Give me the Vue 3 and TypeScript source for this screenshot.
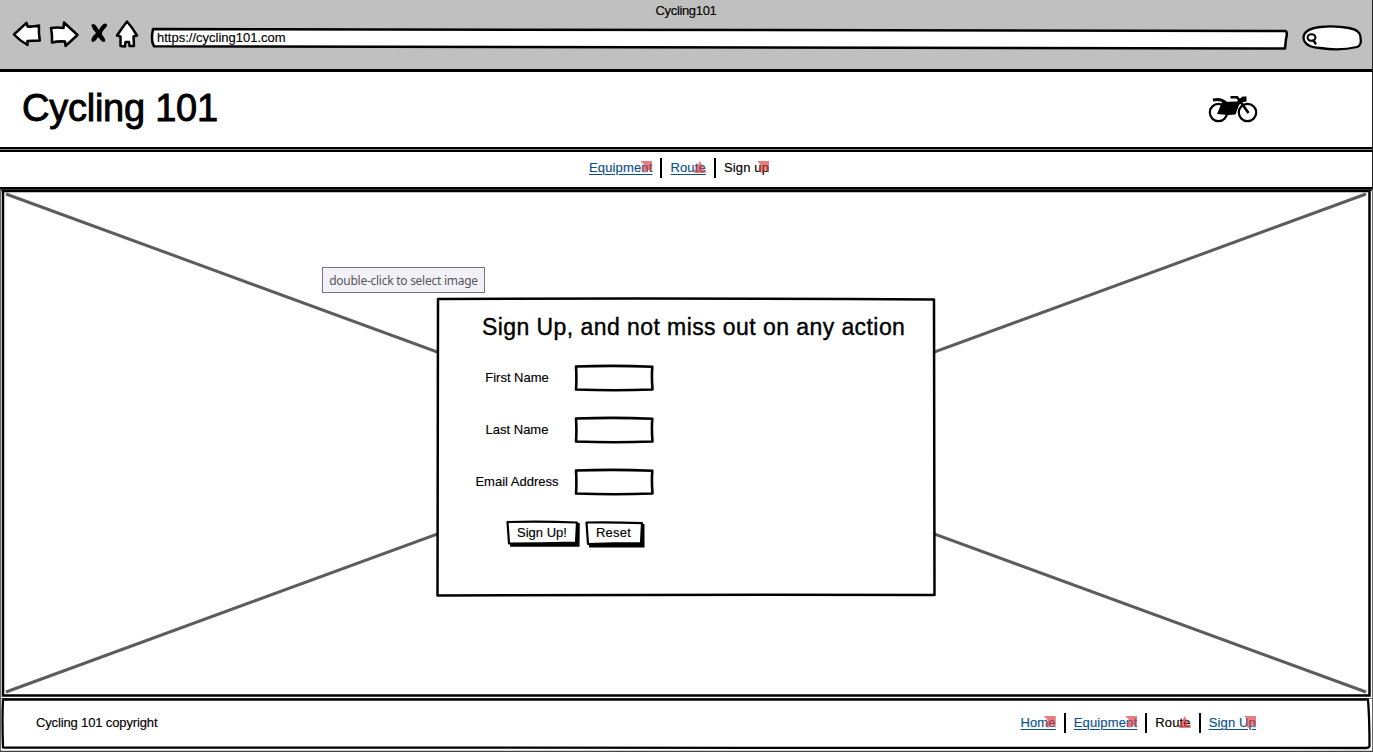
<script setup lang="ts">
interface NavItem {
  label: string
  link: boolean
  marker: 'corner' | 'up'
}

const topNav: NavItem[] = [
  { label: 'Equipment', link: true, marker: 'corner' },
  { label: 'Route', link: true, marker: 'up' },
  { label: 'Sign up', link: false, marker: 'corner' },
]

const footerNav: NavItem[] = [
  { label: 'Home', link: true, marker: 'corner' },
  { label: 'Equipment', link: true, marker: 'corner' },
  { label: 'Route', link: false, marker: 'up' },
  { label: 'Sign Up', link: true, marker: 'corner' },
]

const fields: string[] = ['First Name', 'Last Name', 'Email Address']
</script>

<template>
  <div class="window">
    <header class="chrome">
      <div class="window-title">Cycling101</div>
      <div class="toolbar">
        <svg class="tools" width="140" height="40" viewBox="0 0 140 40">
          <g fill="#fff" stroke="#000" stroke-width="2.500" stroke-linejoin="round">
            <path d="M14 19.500 L26.500 7.800 L27.500 11.500 Q33 12 39 10.500 Q38.500 18 39.800 25.500 L27.500 26 L27.500 30 Q20 26 14 19.500 Z" />
            <path d="M51 13 Q57 12 63.500 13 L64 7.500 L77.500 20 L65.500 31 L65 26.500 Q58 26 52 27.500 Q52.500 20 51 13 Z" />
            <path d="M127 6.500 Q132 12 137 20.500 L133.500 21.500 L134 31 L129.500 31 L129 27 L125.500 27 L125 31.500 L120.500 31 L120.500 21.500 L117 20.500 Q122 13 127 6.500 Z" />
          </g>
          <path d="M91.300 10 Q94 7 97 12 L99 15 Q102 9 105 8.500 Q109 9 105.500 13 Q101.500 16.500 102 19.500 L105 24 Q106 28 102 26.500 L98 22 Q95.500 27 92.500 27 Q90 25.500 93 21 L96 18 Q92 14 91.300 10 Z" />
        </svg>
        <div class="address">
          <svg class="under" width="1138" height="23" viewBox="0 0 1138 23">
            <path d="M3 2 Q600 1.500 1135 4 Q1138 4 1136 12 L1135 21.500 Q600 20 4 19.300 Q.5 14 3 2 Z" fill="#fff" stroke="#000" stroke-width="2.500" stroke-linejoin="round" />
          </svg>
          <span>https://cycling101.com</span>
        </div>
        <svg class="search" width="62" height="27" viewBox="0 0 62 27">
          <path d="M1.500 12.500 Q2 4 18 2 Q33 .5 47 3 Q59 5 58.500 13 Q60 20 55 22 Q38 26 18 23 Q2 22 1.500 12.500 Z" fill="#fff" stroke="#000" stroke-width="2.300" />
          <ellipse cx="9.500" cy="12.500" rx="3.900" ry="3.300" fill="none" stroke="#000" stroke-width="2.100" />
          <path d="M11.500 15.500 L13.500 18.500" stroke="#000" stroke-width="2.400" stroke-linecap="round" />
        </svg>
      </div>
    </header>

    <section class="masthead">
      <h1>Cycling 101</h1>
      <svg class="bike" width="50" height="30" viewBox="0 0 50 30">
        <g fill="none" stroke="#000" stroke-width="2.200">
          <circle cx="10.500" cy="18.500" r="8.700" />
          <circle cx="39.500" cy="18.500" r="8.700" />
          <path d="M5 6 Q13 4 18 9" stroke-width="3" />
          <path d="M22.500 3.200 L29 3.200 L32 7 L40.500 19" stroke-width="2.600" />
        </g>
        <path d="M14 8 L29 7.500 L31.500 5 L34.500 2.500 L38.500 2.500 L38.500 7.500 L34 8.200 L31 11 L27.500 20.500 L20 21 L9 20 Z" />
      </svg>
    </section>

    <nav class="topnav">
      <div class="links">
        <span v-for="item in topNav" :key="item.label" class="entry">
          <a :class="{ link: item.link }">{{ item.label }}<i :class="item.marker"></i></a>
        </span>
      </div>
    </nav>

    <main class="hero">
      <svg class="under" width="1373" height="509" viewBox="0 0 1373 509">
        <path d="M0 1 L1373 1" stroke="#444" stroke-width="2" />
        <path d="M.5 0 L.5 509 M1372.500 0 L1372.500 509" stroke="#666" stroke-width="1" />
        <g fill="none" stroke="#5c5c5c" stroke-width="3">
          <path d="M6 5 L1366 503" />
          <path d="M1366 5 L6 503" />
        </g>
        <path d="M3 2 L1369.500 2 L1369.500 506.500 L3 506.500 Z" fill="none" stroke="#000" stroke-width="2.500" />
      </svg>
      <div class="tip">double-click to select image</div>
      <form class="card" @submit.prevent>
        <svg class="under" width="500" height="300" viewBox="0 0 500 300">
          <path d="M2 2 Q250 1 498 2.500 L498.500 298 Q250 297.500 1.500 298.500 Z" fill="#fff" stroke="#000" stroke-width="2.500" stroke-linejoin="round" />
        </svg>
        <h2>Sign Up, and not miss out on any action</h2>
        <label v-for="field in fields" :key="field" class="row">
          <span class="caption">{{ field }}</span>
          <svg width="80" height="28" viewBox="0 0 80 28">
            <path d="M2 2.500 Q40 1.200 78.300 2.700 Q77.500 14 78.500 25.500 Q40 27 2 25.500 Q2.800 14 2 2.500 Z" fill="#fff" stroke="#000" stroke-width="2.600" stroke-linejoin="round" />
          </svg>
        </label>
        <div class="actions">
          <button type="button" class="signup">
            <svg class="under" width="75" height="28" viewBox="0 0 75 28">
              <path d="M4 4 L73.800 3 L73.500 26.800 L4 26.800 Z" />
              <path d="M1.500 2 Q35 1 71 2.500 L70 22.500 Q35 23.500 3 23.500 Z" fill="#fff" stroke="#000" stroke-width="2.200" stroke-linejoin="round" />
            </svg>
            <span>Sign Up!</span>
          </button>
          <button type="button" class="reset">
            <svg class="under" width="60" height="28" viewBox="0 0 60 28">
              <path d="M4 4 L59.500 4 L59.500 27.500 L4 27.500 Z" />
              <path d="M1.500 2.500 Q28 2 57 3.200 L56 23 Q28 23 3 24 Z" fill="#fff" stroke="#000" stroke-width="2.200" stroke-linejoin="round" />
            </svg>
            <span>Reset</span>
          </button>
        </div>
      </form>
    </main>

    <footer class="footer">
      <svg class="under" width="1373" height="54" viewBox="0 0 1373 54">
        <path d="M0 .2 L1373 .2" stroke="#777" stroke-width="1.500" />
        <path d="M.5 0 L.5 54 M1372.500 0 L1372.500 54" stroke="#666" stroke-width="1" />
        <path d="M3 1.500 L1368 1.500 Q1369.500 20 1369.500 48 Q1369 50 1366 50 L3 49.500 Q2 20 3 1.500 Z" fill="none" stroke="#000" stroke-width="2.300" stroke-linejoin="round" />
        <path d="M0 53.300 L1373 53.300" stroke="#444" stroke-width="1.200" />
      </svg>
      <span class="copyright">Cycling 101 copyright</span>
      <div class="links">
        <span v-for="item in footerNav" :key="item.label" class="entry">
          <a :class="{ link: item.link }">{{ item.label }}<i :class="item.marker"></i></a>
        </span>
      </div>
    </footer>
  </div>
</template>

<style>
html,
body {
  overflow: hidden;
  background: #fff;
}
</style>

<style scoped>
.window {
  box-sizing: border-box;
  display: flex;
  flex-direction: column;
  width: 1373px;
  height: 752px;
  overflow: hidden;
  background: #fff;
  color: #000;
  font: 13px/16px "Liberation Sans", Arial, sans-serif;
  -webkit-text-stroke: 0.15px;
}
svg {
  display: block;
  flex: none;
}
.under {
  position: absolute;
  left: 0;
  top: 0;
}
h1,
h2 {
  margin: 0;
  font-weight: 400;
  white-space: nowrap;
}
.chrome {
  box-sizing: border-box;
  height: 72px;
  background: #c0c0c0;
  border-bottom: 3px solid #000;
  border-right: 1px solid #222;
}
.window-title {
  height: 15px;
  padding-top: 3px;
  text-align: center;
  letter-spacing: -0.35px;
}
.toolbar {
  display: flex;
  align-items: flex-start;
}
.tools {
  margin-top: -3px;
}
.address {
  position: relative;
  width: 1138px;
  height: 23px;
  margin: 9px 0 0 10px;
}
.address span {
  position: relative;
  display: block;
  padding: 3px 0 0 7px;
}
.search {
  margin: 7px 0 0 14px;
}
.masthead {
  box-sizing: border-box;
  display: flex;
  justify-content: space-between;
  height: 80px;
  padding: 12px 114px 0 22px;
  border-bottom: 2px solid #000;
  border-right: 1px solid #222;
  background: linear-gradient(#000, #000) 0 75px / 100% 2px no-repeat, linear-gradient(#888, #888) 0 77px / 100% 1px no-repeat;
}
h1 {
  font-size: 38px;
  line-height: 48px;
  letter-spacing: -0.25px;
  -webkit-text-stroke: 0.9px;
}
.bike {
  margin-top: 10px;
}
.topnav {
  box-sizing: border-box;
  display: flex;
  justify-content: center;
  height: 37px;
  padding: 6px 14px 0 0;
  border-bottom: 2px solid #000;
  border-right: 1px solid #222;
}
.links {
  display: flex;
  letter-spacing: 0.15px;
}
.entry {
  height: 20px;
  line-height: 20px;
  white-space: nowrap;
}
.entry + .entry {
  margin-left: 8px;
  padding-left: 8px;
  border-left: 2px solid #000;
}
.entry a {
  position: relative;
  display: block;
}
.link {
  color: #0b4f8f;
  text-decoration: underline;
  text-decoration-thickness: 1px;
  text-underline-offset: 2px;
}
.entry i {
  position: absolute;
  right: 0;
  top: 3px;
  width: 12px;
  height: 12px;
  background: rgba(217, 60, 60, 0.65);
}
.corner {
  clip-path: polygon(0 0, 100% 0, 100% 100%, 72% 72%, 35% 100%, 10% 75%, 35% 38%);
}
.up {
  clip-path: polygon(50% 0, 78% 50%, 78% 72%, 100% 72%, 100% 100%, 0 100%, 0 72%, 22% 72%, 22% 50%);
}
.hero {
  position: relative;
  height: 509px;
}
.tip {
  position: absolute;
  left: 322px;
  top: 78px;
  box-sizing: border-box;
  width: 163px;
  height: 26px;
  border: 1px solid #777;
  background: #f1f1f7;
  color: #575757;
  font: 12px/26px "Noto Sans", "Open Sans", sans-serif;
  letter-spacing: -0.26px;
  text-align: center;
  white-space: nowrap;
  -webkit-text-stroke: 0;
}
.card {
  position: relative;
  box-sizing: border-box;
  width: 500px;
  height: 300px;
  margin: 0 0 0 436px;
  top: 108px;
}
h2 {
  position: relative;
  padding: 15px 0 0 46px;
  font-size: 23px;
  line-height: 30px;
  letter-spacing: 0.43px;
  -webkit-text-stroke: 0.4px;
}
.row {
  position: relative;
  display: flex;
  align-items: center;
  height: 28px;
  margin: 0 0 24px 31px;
}
h2 + .row {
  margin-top: 22px;
}
.caption {
  width: 100px;
  margin-right: 7px;
  text-align: center;
}
.actions {
  position: relative;
  display: flex;
  gap: 4px;
  padding-left: 70px;
}
button {
  position: relative;
  height: 28px;
  padding: 0;
  border: 0;
  background: none;
  color: #000;
  font: inherit;
}
button span {
  position: relative;
  display: block;
  margin: -3px 3px 0 0;
}
.signup {
  width: 75px;
}
.reset {
  width: 60px;
}
.reset span {
  letter-spacing: 0.2px;
}
.footer {
  position: relative;
  box-sizing: border-box;
  display: flex;
  justify-content: space-between;
  height: 54px;
  padding: 15px 117px 0 36px;
}
.copyright {
  line-height: 20px;
  letter-spacing: -0.14px;
}
.footer .links,
.copyright {
  position: relative;
}
</style>
